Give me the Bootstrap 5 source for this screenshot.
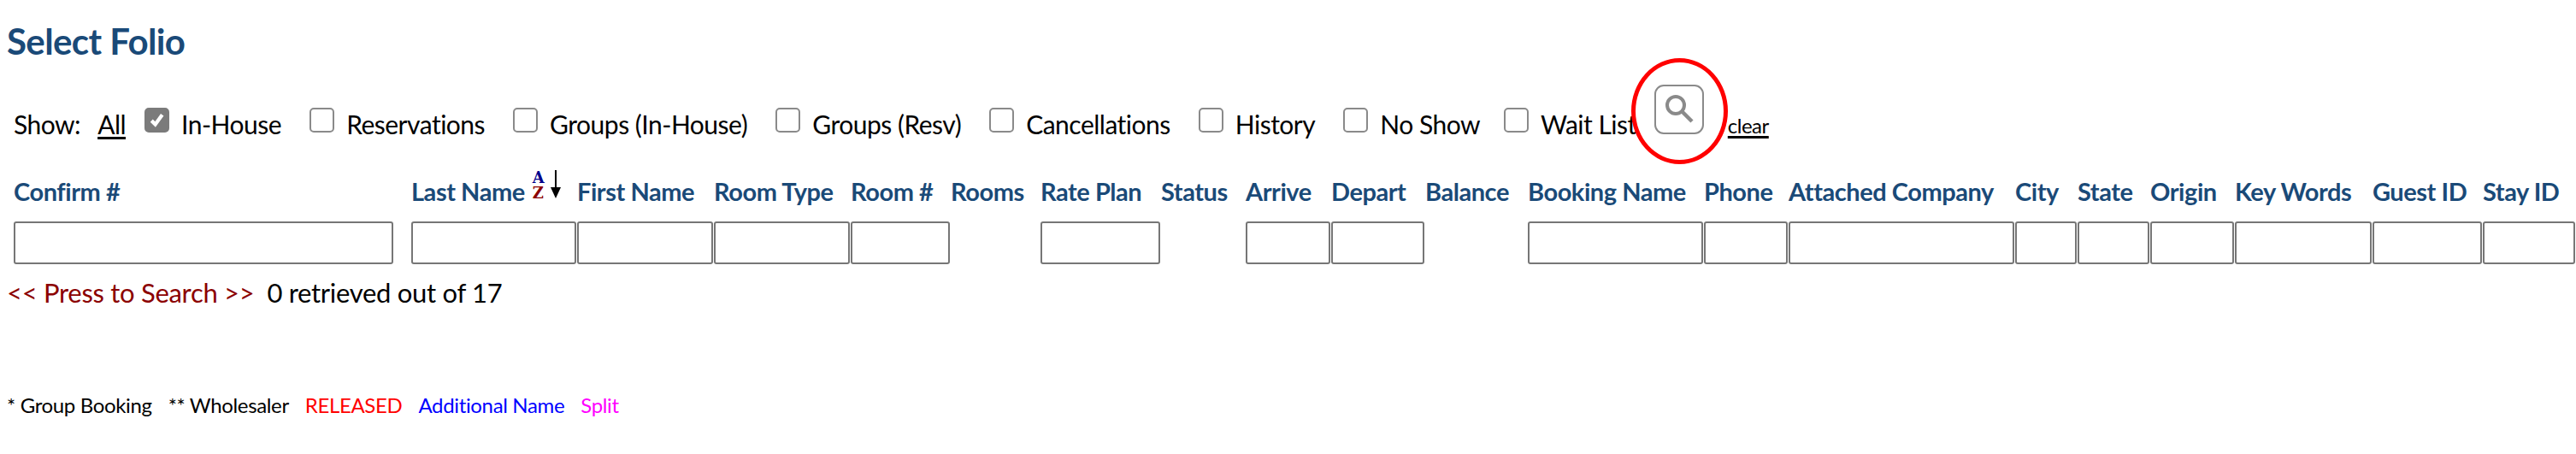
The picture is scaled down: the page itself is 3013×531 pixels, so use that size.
<!DOCTYPE html>
<html lang="en">
<head>
<meta charset="utf-8">
<title>Select Folio</title>
<link href="https://cdn.jsdelivr.net/npm/bootstrap@5.3.0/dist/css/bootstrap.min.css" rel="stylesheet">
<style>
html,body{background:#fff;color:#000;font-family:"Lato","Liberation Sans",sans-serif;overflow:hidden;}
.folio-page{width:3013px;height:531px;position:relative;}
.folio-title{font-size:42px;font-weight:700;color:#1a4a78;margin:0;padding:24px 0 0 8px;line-height:48px;letter-spacing:-.6px;}
.show-row{height:100px;padding:0 0 10px 16px;font-size:30px;line-height:34px;letter-spacing:-.5px;}
.show-row a{color:#000;text-decoration-thickness:3px;text-underline-offset:3px;}
.all-link{margin-left:20px;}
.show-item{display:flex;align-items:flex-end;margin:0 0 0 33px;}
.show-item.first-item{margin-left:22px;}
.show-item.tight-item{margin-left:28px;}
.show-row .form-check-input{width:29px;height:29px;margin:0 0 7px;border:2px solid #8a8a8a;border-radius:5px;background-color:#fff;flex:none;opacity:1;}
.show-row .form-check-input:checked{background-color:#7b7b7b;border-color:#7b7b7b;background-size:100%;background-image:url("data:image/svg+xml,%3csvg xmlns='http://www.w3.org/2000/svg' viewBox='0 0 20 20'%3e%3cpath fill='none' stroke='%23fff' stroke-width='3.4' d='M5 10.5l3.5 3.5 6.5-9'/%3e%3c/svg%3e");}
.lbl-gap{margin-left:14px;}
.search-tool{width:58px;height:58px;border:2px solid #8a8a8a;border-radius:11px;background:#fff;padding:0;margin:0 28px 5px 21px;display:flex;align-items:center;justify-content:center;}
.show-row .clear-link{font-size:24px;line-height:30px;letter-spacing:-.5px;}
.red-ring{position:absolute;left:1908px;top:68px;width:113px;height:124px;border:5px solid #f00;border-radius:50%;pointer-events:none;}
.folio-table{table-layout:fixed;width:2997px;border-collapse:collapse;margin-left:16px;}
.folio-table th{font-size:29px;font-weight:700;color:#1a4a78;padding:0 0 15px;line-height:34px;height:84px;vertical-align:bottom;white-space:nowrap;letter-spacing:-.45px;}
.folio-table td{padding:0;height:56px;vertical-align:top;}
.folio-input{display:block;height:50px;width:calc(100% - 1px);border:2px solid #767676;border-radius:3px;background:#fff;padding:0;margin-top:3px;}
.folio-input.wide-input{width:444px;}
.sort-mark{display:inline-flex;align-items:flex-start;vertical-align:top;margin-left:9px;margin-top:-8px;height:36px;}
.az-stack{display:flex;flex-direction:column;font:700 18px/18px "DejaVu Serif",serif;letter-spacing:0;margin-right:6px;}
.az-a{color:#00008b;}
.az-z{color:#8b0000;}
.result-row{font-size:31px;line-height:34px;padding-left:8px;margin-top:13px;letter-spacing:-.3px;}
.press-link{color:#8b0000;margin-right:15px;}
.legend-row{font-size:24px;line-height:30px;padding-left:8px;margin-top:100px;letter-spacing:-.35px;gap:19px;}
.tint-red{color:#f00;}.tint-blue{color:#00f;}.tint-pink{color:#f0f;}
</style>
</head>
<body>
<div class="folio-page">
  <h1 class="folio-title">Select Folio</h1>
  <div class="show-row d-flex align-items-end">
    <span class="show-lead">Show:</span>
    <a href="#" class="all-link">All</a>
    <label class="show-item first-item"><input class="form-check-input" type="checkbox" checked disabled><span class="lbl-gap">In-House</span></label>
    <label class="show-item"><input class="form-check-input" type="checkbox" disabled><span class="lbl-gap">Reservations</span></label>
    <label class="show-item"><input class="form-check-input" type="checkbox" disabled><span class="lbl-gap">Groups (In-House)</span></label>
    <label class="show-item"><input class="form-check-input" type="checkbox" disabled><span class="lbl-gap">Groups (Resv)</span></label>
    <label class="show-item"><input class="form-check-input" type="checkbox" disabled><span class="lbl-gap">Cancellations</span></label>
    <label class="show-item"><input class="form-check-input" type="checkbox" disabled><span class="lbl-gap">History</span></label>
    <label class="show-item"><input class="form-check-input" type="checkbox" disabled><span class="lbl-gap">No Show</span></label>
    <label class="show-item tight-item"><input class="form-check-input" type="checkbox" disabled><span class="lbl-gap">Wait List</span></label>
    <button class="search-tool" type="button" aria-label="Search">
      <svg width="40" height="40" viewBox="0 0 40 40" fill="none" stroke="#8a8a8a" aria-hidden="true"><circle cx="16" cy="15" r="10" stroke-width="4"/><path d="M23 22 L35 34" stroke-width="4.5"/></svg>
    </button>
    <a href="#" class="clear-link">clear</a>
  </div>
  <div class="red-ring"></div>
  <table class="folio-table">
    <colgroup>
      <col style="width:465px"><col style="width:194px"><col style="width:160px"><col style="width:160px"><col style="width:117px"><col style="width:105px"><col style="width:141px"><col style="width:99px"><col style="width:100px"><col style="width:110px"><col style="width:120px"><col style="width:206px"><col style="width:99px"><col style="width:265px"><col style="width:73px"><col style="width:85px"><col style="width:99px"><col style="width:161px"><col style="width:129px"><col style="width:109px">
    </colgroup>
    <thead>
      <tr>
        <th>Confirm #</th>
        <th>Last Name<span class="sort-mark"><span class="az-stack"><span class="az-a">A</span><span class="az-z">Z</span></span><svg width="14" height="34" viewBox="0 0 14 34" aria-hidden="true"><path d="M7 0V22" stroke="#000" stroke-width="2"/><path d="M1 20H13L7 33Z" fill="#000"/></svg></span></th>
        <th>First Name</th><th>Room Type</th><th>Room #</th><th>Rooms</th><th>Rate Plan</th><th>Status</th><th>Arrive</th><th>Depart</th><th>Balance</th><th>Booking Name</th><th>Phone</th><th>Attached Company</th><th>City</th><th>State</th><th>Origin</th><th>Key Words</th><th>Guest ID</th><th>Stay ID</th>
      </tr>
    </thead>
    <tbody>
      <tr>
        <td><input class="folio-input wide-input" type="text" aria-label="Confirm #"></td>
        <td><input class="folio-input" type="text" aria-label="Last Name"></td>
        <td><input class="folio-input" type="text" aria-label="First Name"></td>
        <td><input class="folio-input" type="text" aria-label="Room Type"></td>
        <td><input class="folio-input" type="text" aria-label="Room #"></td>
        <td></td>
        <td><input class="folio-input" type="text" aria-label="Rate Plan"></td>
        <td></td>
        <td><input class="folio-input" type="text" aria-label="Arrive"></td>
        <td><input class="folio-input" type="text" aria-label="Depart"></td>
        <td></td>
        <td><input class="folio-input" type="text" aria-label="Booking Name"></td>
        <td><input class="folio-input" type="text" aria-label="Phone"></td>
        <td><input class="folio-input" type="text" aria-label="Attached Company"></td>
        <td><input class="folio-input" type="text" aria-label="City"></td>
        <td><input class="folio-input" type="text" aria-label="State"></td>
        <td><input class="folio-input" type="text" aria-label="Origin"></td>
        <td><input class="folio-input" type="text" aria-label="Key Words"></td>
        <td><input class="folio-input" type="text" aria-label="Guest ID"></td>
        <td><input class="folio-input" type="text" aria-label="Stay ID"></td>
      </tr>
    </tbody>
  </table>
  <div class="result-row"><a href="#" class="press-link text-decoration-none">&lt;&lt; Press to Search &gt;&gt;</a><span>0 retrieved out of 17</span></div>
  <div class="legend-row d-flex">
    <span>* Group Booking</span>
    <span>** Wholesaler</span>
    <span class="tint-red">RELEASED</span>
    <span class="tint-blue">Additional Name</span>
    <span class="tint-pink">Split</span>
  </div>
</div>
<script src="https://cdn.jsdelivr.net/npm/bootstrap@5.3.0/dist/js/bootstrap.bundle.min.js"></script>
</body>
</html>
